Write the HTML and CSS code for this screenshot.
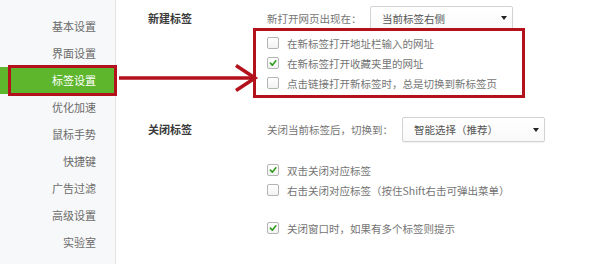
FILE: index.html
```html
<!DOCTYPE html>
<html lang="zh-CN">
<head>
<meta charset="utf-8">
<title>标签设置</title>
<link rel="stylesheet" href="styles.css">
</head>
<body>
<div class="page">
  <nav class="sidebar">
    <div class="nav-item">基本设置</div>
    <div class="nav-item">界面设置</div>
    <div class="nav-item active">标签设置</div>
    <div class="nav-item">优化加速</div>
    <div class="nav-item">鼠标手势</div>
    <div class="nav-item">快捷键</div>
    <div class="nav-item">广告过滤</div>
    <div class="nav-item">高级设置</div>
    <div class="nav-item">实验室</div>
  </nav>
  <main class="content">
    <section class="group group-new">
      <h3 class="title">新建标签</h3>
      <div class="body">
        <div class="row">
          <span class="label label-new">新打开网页出现在：</span>
          <div class="select">当前标签右侧<i class="caret"></i></div>
        </div>
        <div class="marked">
          <div class="check"><span class="box"></span>在新标签打开地址栏输入的网址</div>
          <div class="check"><span class="box on"><svg viewBox="0 0 12 12" width="12" height="12"><path d="M2.8 6.2 L5.2 8.6 L9.4 3.4" fill="none" stroke="#2f9a1c" stroke-width="1.9" stroke-linecap="round" stroke-linejoin="round"/></svg></span>在新标签打开收藏夹里的网址</div>
          <div class="check"><span class="box"></span>点击链接打开新标签时，总是切换到新标签页</div>
        </div>
      </div>
    </section>
    <section class="group group-close">
      <h3 class="title">关闭标签</h3>
      <div class="body">
        <div class="row row-close">
          <span class="label label-close">关闭当前标签后，切换到：</span>
          <div class="select">智能选择（推荐）<i class="caret"></i></div>
        </div>
        <div class="checks">
          <div class="check"><span class="box on"><svg viewBox="0 0 12 12" width="12" height="12"><path d="M2.8 6.2 L5.2 8.6 L9.4 3.4" fill="none" stroke="#2f9a1c" stroke-width="1.9" stroke-linecap="round" stroke-linejoin="round"/></svg></span>双击关闭对应标签</div>
          <div class="check"><span class="box"></span>右击关闭对应标签（按住Shift右击可弹出菜单）</div>
        </div>
        <div class="checks checks-last">
          <div class="check"><span class="box on"><svg viewBox="0 0 12 12" width="12" height="12"><path d="M2.8 6.2 L5.2 8.6 L9.4 3.4" fill="none" stroke="#2f9a1c" stroke-width="1.9" stroke-linecap="round" stroke-linejoin="round"/></svg></span>关闭窗口时，如果有多个标签则提示</div>
        </div>
      </div>
    </section>
  </main>
  <svg class="arrow" viewBox="0 0 140 32" width="140" height="32">
    <path d="M0 16 L134 16" stroke="#b3111b" stroke-width="3.5" fill="none"/>
    <path d="M117 3.5 L136 16 L117 28.5" stroke="#b3111b" stroke-width="3.5" fill="none" stroke-linejoin="miter"/>
  </svg>
</div>
</body>
</html>
```
FILE: styles.css
```css
* { box-sizing: border-box; }
html, body {
  margin: 0;
  padding: 0;
  background: #ffffff;
}
body {
  font-family: "Noto Sans CJK SC", "Microsoft YaHei", sans-serif;
  color: #666;
  width: 600px;
  height: 264px;
  overflow: hidden;
}
.page {
  position: relative;
  display: flex;
  height: 264px;
}
.sidebar {
  width: 116px;
  flex: none;
  background: #f7f8f9;
  border-right: 1px solid #e4e4e4;
  padding-top: 13px;
}
.nav-item {
  position: relative;
  height: 27px;
  line-height: 27px;
  text-align: right;
  padding-right: 19px;
  font-size: 11px;
  color: #6b6b6b;
}
.nav-item.active {
  background: #5db62c;
  color: #fff;
}
.nav-item.active::after {
  content: "";
  position: absolute;
  left: 8px;
  right: -2px;
  top: -2px;
  bottom: -2px;
  border: 3px solid #b3111b;
}
.arrow {
  position: absolute;
  left: 119px;
  top: 62px;
}
.content {
  flex: 1;
  padding-top: 6px;
  padding-left: 32px;
}
.group {
  display: grid;
  grid-template-columns: 119px 1fr;
}
.title {
  margin: 0;
  font-size: 11px;
  font-weight: bold;
  color: #3a3a3a;
  line-height: 24px;
}
.group-close { margin-top: 19px; }
.group-close .title { line-height: 25px; }
.row {
  display: flex;
  align-items: center;
  height: 24px;
}
.row-close { height: 25px; }
.label {
  font-size: 10.5px;
  color: #747474;
  white-space: nowrap;
}
.label-new { width: 103px; }
.label-close { width: 135px; }
.select {
  position: relative;
  width: 143px;
  height: 100%;
  border: 1px solid #d2d2d2;
  border-radius: 2px;
  background: linear-gradient(#ffffff, #f9f9f9);
  box-shadow: 0 1px 1px rgba(0,0,0,0.06);
  font-size: 10.5px;
  color: #555;
  display: flex;
  align-items: center;
  padding-left: 11px;
}
.caret {
  position: absolute;
  right: 5px;
  top: 50%;
  margin-top: -2px;
  width: 0;
  height: 0;
  border-left: 3px solid transparent;
  border-right: 3px solid transparent;
  border-top: 4px solid #222;
}
.marked {
  position: relative;
  margin-top: -2px;
  margin-left: -14px;
  width: 272px;
  border: 3px solid #b3111b;
  padding: 2px 0 2px 11px;
  background: #fff;
}
.check {
  display: flex;
  align-items: center;
  height: 20px;
  font-size: 10.5px;
  color: #747474;
  white-space: nowrap;
}
.box {
  width: 12px;
  height: 12px;
  flex: none;
  margin-right: 8px;
  border: 1px solid #b4b4b4;
  border-radius: 2px;
  background: linear-gradient(#fff, #f3f3f3);
  display: flex;
  align-items: center;
  justify-content: center;
}
.box svg { display: block; }
.checks { margin-top: 18px; }
```
